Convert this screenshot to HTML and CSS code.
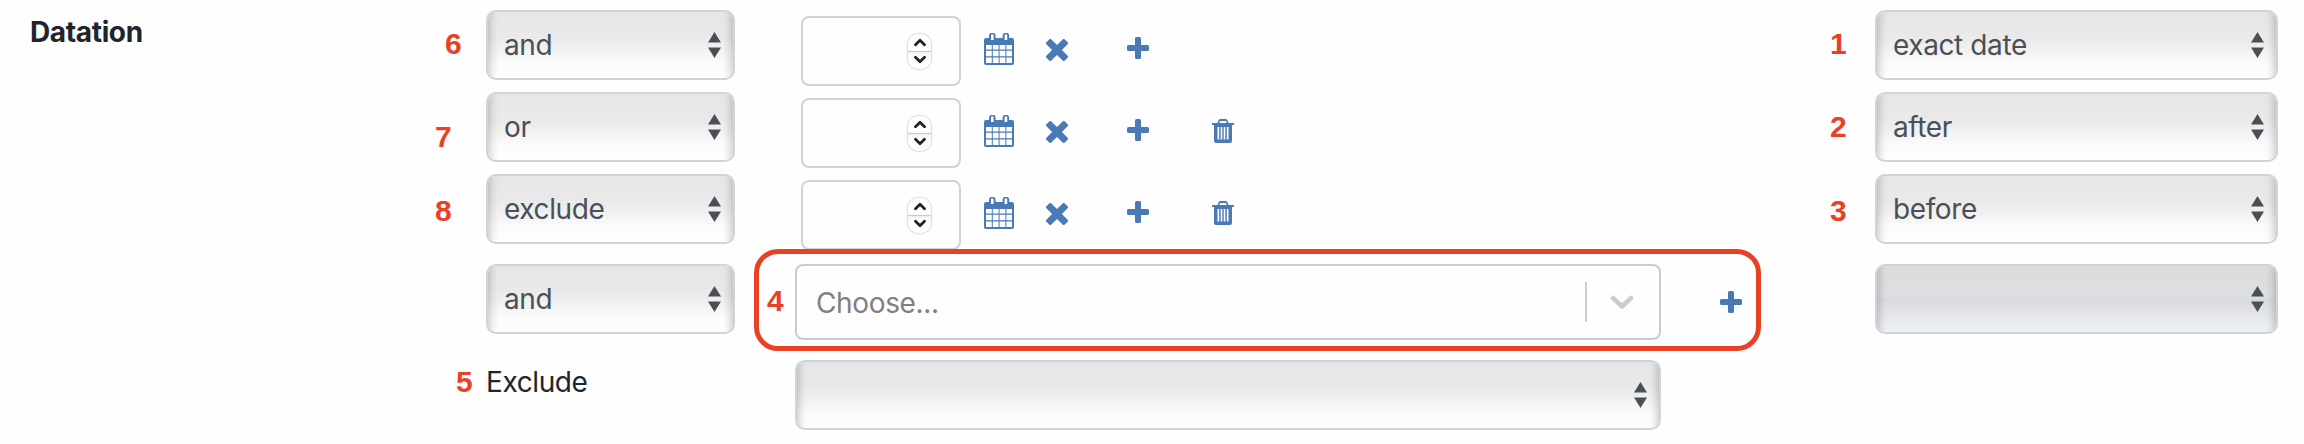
FILE: index.html
```html
<!DOCTYPE html>
<html lang="en">
<head>
<meta charset="utf-8">
<title>Datation</title>
<link rel="stylesheet" href="styles.css">
</head>
<body>
<svg class="defs" aria-hidden="true">
  <symbol id="sort" viewBox="0 0 13 26"><path d="M6.5 0 13 10.5H0zM0 15.5h13L6.5 26z"/></symbol>
  <symbol id="calendar" viewBox="0 0 30 33">
    <path fill-rule="evenodd" d="M2 5h3V3a3.3 3.3 0 0 1 6.600 0v2h7V3a3.300 3.300 0 0 1 6.600 0v2H28a2 2 0 0 1 2 2v23a2 2 0 0 1-2 2H2a2 2 0 0 1-2-2V7a2 2 0 0 1 2-2zM7 2.500v4.500h2.600V2.500a1.300 1.300 0 0 0-2.600 0zM20.600 2.500v4.500h2.600V2.500a1.300 1.300 0 0 0-2.600 0zM2 12v4.500h5.800V12zM8.800 12v4.500h5.800V12zM15.600 12v4.500h5.800V12zM22.400 12v4.500h5.600V12zM2 17.700v5.600h5.800v-5.600zM8.800 17.700v5.600h5.800v-5.600zM15.600 17.700v5.600h5.800v-5.600zM22.400 17.700v5.600h5.600v-5.600zM2 24.500v5.500h5.800v-5.500zM8.800 24.500v5.500h5.800v-5.500zM15.600 24.500v5.500h5.800v-5.500zM22.400 24.500v5.500h5.600v-5.500z"/>
  </symbol>
  <symbol id="plus" viewBox="0 0 22 22"><path d="M9.500 0h3a1.500 1.500 0 0 1 1.500 1.500V8h6.500A1.500 1.500 0 0 1 22 9.500v3a1.500 1.500 0 0 1-1.500 1.500H14v6.500a1.500 1.500 0 0 1-1.500 1.500h-3A1.500 1.500 0 0 1 8 20.500V14H1.500A1.500 1.500 0 0 1 0 12.500v-3A1.500 1.500 0 0 1 1.500 8H8V1.500A1.500 1.500 0 0 1 9.500 0z"/></symbol>
  <symbol id="cross" viewBox="0 0 22 22"><path transform="rotate(45 11 11)" d="M9 -2h4a1.500 1.500 0 0 1 1.500 1.500V7.500h8A1.500 1.500 0 0 1 24 9v4a1.500 1.500 0 0 1-1.500 1.500h-8v8a1.500 1.500 0 0 1-1.500 1.500h-4A1.500 1.500 0 0 1 7.500 22.500V14.500h-8A1.500 1.500 0 0 1-2 13V9A1.500 1.500 0 0 1-.5 7.500h8V-.5A1.500 1.500 0 0 1 9-2z"/></symbol>
  <symbol id="trash" viewBox="0 0 22 24"><path fill-rule="evenodd" d="M0 4h5.500l1-2.600Q7 0 8.500 0h5q1.500 0 2 1.400l1 2.600H22v2h-2v16a2 2 0 0 1-2 2H4a2 2 0 0 1-2-2V6H0zM7.300 4h7.400l-.7-2H8zM5.500 8v12.500h1.700V8zM8.700 8v12.500h1.600V8zM11.700 8v12.500h1.600V8zM14.800 8v12.500h1.700V8z"/></symbol>
  <symbol id="steps" viewBox="0 0 12 26"><path fill="none" stroke="#222" stroke-width="2.800" stroke-linecap="round" stroke-linejoin="round" d="m1.500 6.700 4.500-4.500 4.500 4.500M1.500 19.300l4.500 4.500 4.500-4.500"/></symbol>
</svg>
<main class="datation">
  <h2 class="title">Datation</h2>

  <div class="operators">
    <div class="select"><span>and</span><svg class="sort"><use href="#sort"/></svg></div>
    <div class="select"><span>or</span><svg class="sort"><use href="#sort"/></svg></div>
    <div class="select"><span>exclude</span><svg class="sort"><use href="#sort"/></svg></div>
    <div class="select gap-above"><span>and</span><svg class="sort"><use href="#sort"/></svg></div>
    <div class="exclude">Exclude</div>
  </div>

  <div class="values">
    <div class="row">
      <div class="number"><span class="spinner"><svg><use href="#steps"/></svg></span></div>
      <svg class="calendar"><use href="#calendar"/></svg><svg class="clear"><use href="#cross"/></svg><svg class="plus"><use href="#plus"/></svg>
    </div>
    <div class="row">
      <div class="number"><span class="spinner"><svg><use href="#steps"/></svg></span></div>
      <svg class="calendar"><use href="#calendar"/></svg><svg class="clear"><use href="#cross"/></svg><svg class="plus"><use href="#plus"/></svg><svg class="trash"><use href="#trash"/></svg>
    </div>
    <div class="row">
      <div class="number"><span class="spinner"><svg><use href="#steps"/></svg></span></div>
      <svg class="calendar"><use href="#calendar"/></svg><svg class="clear"><use href="#cross"/></svg><svg class="plus"><use href="#plus"/></svg><svg class="trash"><use href="#trash"/></svg>
    </div>
    <div class="choose-row">
      <div class="choose">
        <span class="placeholder">Choose...</span>
        <i class="separator"></i>
        <svg class="chevron" viewBox="0 0 24 15"><path d="M3 3l9 8.500L21 3"/></svg>
      </div>
      <svg class="plus"><use href="#plus"/></svg>
    </div>
    <div class="select wide"><span></span><svg class="sort"><use href="#sort"/></svg></div>
  </div>

  <div class="types">
    <div class="select"><span>exact date</span><svg class="sort"><use href="#sort"/></svg></div>
    <div class="select"><span>after</span><svg class="sort"><use href="#sort"/></svg></div>
    <div class="select"><span>before</span><svg class="sort"><use href="#sort"/></svg></div>
    <div class="select gap-above active"><span></span><svg class="sort"><use href="#sort"/></svg></div>
  </div>

  <div class="highlight"></div>
  <b class="mark m1">1</b>
  <b class="mark m2">2</b>
  <b class="mark m3">3</b>
  <b class="mark m4">4</b>
  <b class="mark m5">5</b>
  <b class="mark m6">6</b>
  <b class="mark m7">7</b>
  <b class="mark m8">8</b>
</main>
</body>
</html>
```
FILE: styles.css
```css
* { box-sizing: border-box; }
body {
  margin: 0;
  background: #fefefe;
  font-family: Inter, sans-serif;
  font-size: 28px;
  line-height: 42px;
  color: #212529;
}
svg { display: block; flex: none; }
.defs { position: absolute; width: 0; height: 0; }

.datation {
  position: relative;
  display: grid;
  grid-template-columns: 456px 249px 1020px 523px;
  height: 444px;
  padding: 10px 0 0 30px;
  overflow: hidden;
}
.title { margin: 0; padding-top: 1px; font-size: 28px; font-weight: 700; letter-spacing: -0.35px; }

.operators, .types { display: flex; flex-direction: column; gap: 12px; }
.types { margin-left: 120px; width: 403px; }

.select {
  display: flex;
  align-items: center;
  justify-content: space-between;
  height: 70px;
  flex: none;
  padding: 0 12px 0 16px;
  border: 2px solid #ced4da;
  border-radius: 10px;
  background:
    linear-gradient(90deg, rgba(0,0,0,.15), rgba(0,0,0,.05) 5px, transparent 10px, transparent calc(100% - 10px), rgba(0,0,0,.05) calc(100% - 5px), rgba(0,0,0,.15)),
    linear-gradient(#e6e6e6, #e9e9e9 35%, #eee 50%, #fafafa 75%, #fff);
  background-origin: padding-box;
  background-clip: padding-box;
  color: #495057;
  letter-spacing: -0.4px;
}
.sort { width: 13px; height: 26px; fill: #495057; }
.gap-above { margin-top: 8px; }
.active {
  background:
    linear-gradient(90deg, rgba(0,0,0,.15), rgba(0,0,0,.05) 5px, transparent 10px, transparent calc(100% - 10px), rgba(0,0,0,.05) calc(100% - 5px), rgba(0,0,0,.15)),
    linear-gradient(#dcdddf, #dddee0 49%, #d9dadd 50%, #e5e6e9 75%, #eff1f4);
  background-clip: padding-box;
}
.exclude { margin-top: 15px; letter-spacing: -0.4px; }

.values { display: flex; flex-direction: column; padding: 6px 0 0 60px; }
.row { display: flex; align-items: flex-start; height: 82px; padding-left: 6px; }
.number {
  display: flex;
  align-items: center;
  justify-content: flex-end;
  width: 160px;
  height: 70px;
  padding-right: 28px;
  border: 2px solid #ced4da;
  border-radius: 8px;
}
.spinner {
  display: flex;
  align-items: center;
  justify-content: center;
  width: 23px;
  height: 35px;
  border-radius: 10px;
  background: linear-gradient(#fff 47%, #ccc 48%, #ccc 52%, #f5f5f5 53%, #fff 70%);
  box-shadow: 0 0 2px rgba(0,0,0,.45);
}
.spinner svg { width: 12px; height: 26px; }
.calendar { width: 30px; height: 33px; margin: 17px 0 0 23px; fill: #4a7ab5; }
.clear { width: 22px; height: 22px; margin: 23px 0 0 32px; fill: #4a7ab5; }
.plus { width: 22px; height: 22px; fill: #4a7ab5; }
.row .plus { margin: 21px 0 0 59px; }
.trash { width: 22px; height: 24px; margin: 21px 0 0 63px; fill: #4a7ab5; }

.choose-row { display: flex; align-items: center; height: 76px; margin-top: 2px; gap: 59px; }
.choose {
  display: flex;
  align-items: center;
  width: 866px;
  height: 76px;
  padding: 0 25px 0 19px;
  border: 2px solid #ccc;
  border-radius: 8px;
  background: #fefefe;
}
.placeholder { flex: 1; padding-top: 2px; color: #808080; letter-spacing: -0.35px; }
.separator { width: 2px; height: 40px; margin-right: 23px; background: #ccc; }
.chevron { width: 24px; height: 15px; fill: none; stroke: #ccc; stroke-width: 4.500; stroke-linecap: round; stroke-linejoin: round; }
.wide { width: 866px; margin-top: 20px; }

/* Annotations drawn over the form */
.highlight {
  position: absolute;
  left: 754px;
  top: 249px;
  width: 1007px;
  height: 102px;
  border: 5px solid #e84125;
  border-radius: 24px;
}
.mark {
  position: absolute;
  font: bold 30px/30px "Liberation Sans", Arial, sans-serif;
  color: #e84125;
}
.m1 { left: 1830px; top: 29px; }
.m2 { left: 1830px; top: 112px; }
.m3 { left: 1830px; top: 196px; }
.m4 { left: 767px; top: 286px; }
.m5 { left: 456px; top: 367px; }
.m6 { left: 445px; top: 29px; }
.m7 { left: 435px; top: 122px; }
.m8 { left: 435px; top: 196px; }
```
